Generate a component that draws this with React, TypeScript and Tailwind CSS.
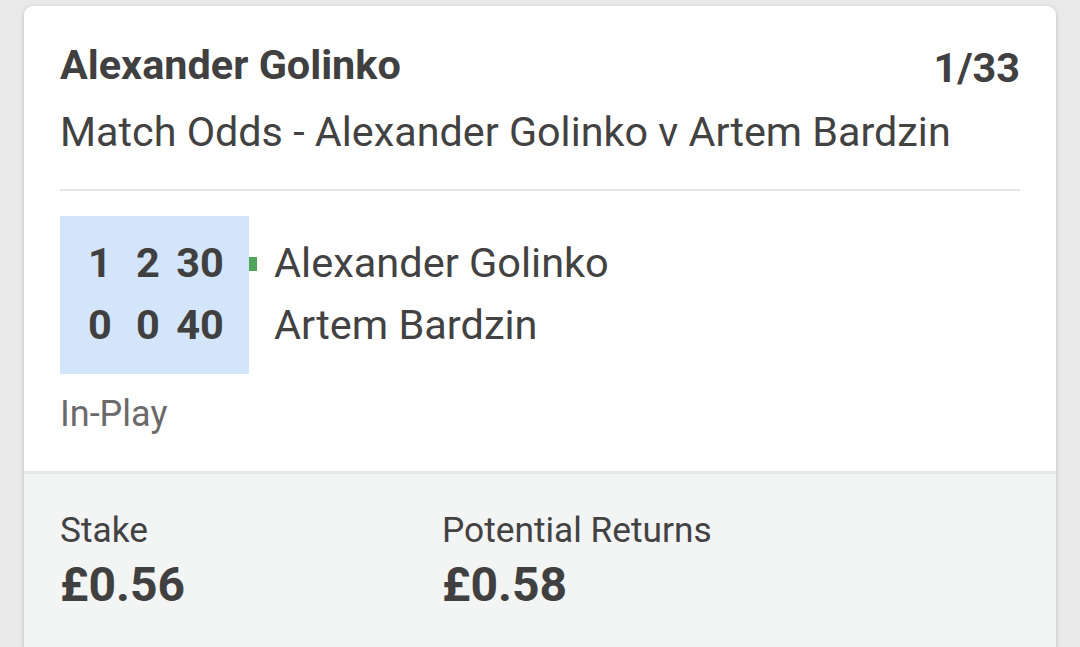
const scores = [
  { sets: "1", games: "2", points: "30", name: "Alexander Golinko", serving: true },
  { sets: "0", games: "0", points: "40", name: "Artem Bardzin", serving: false },
];

export default function App() {
  return (
    <div
      className="h-[647px] overflow-hidden bg-[#e9e9e9] pt-[6px] px-[24px] text-[#424242]"
      style={{ fontFamily: "Roboto, 'Open Sans', sans-serif" }}
    >
      <div className="rounded-t-[9px] bg-white shadow-[0_1px_4px_rgba(0,0,0,0.18)] overflow-hidden">
        {/* Bet details */}
        <div className="px-[36px] pt-[34px] pb-[36px]">
          <div className="flex items-start justify-between">
            <div className="text-[41.4px] leading-[50px] font-bold text-[#404040]">
              Alexander Golinko
            </div>
            <div className="mt-[3px] text-[41.4px] leading-[50px] font-bold text-[#404040]">
              1/33
            </div>
          </div>
          <div className="mt-[14px] text-[41.3px] leading-[50px]">
            Match Odds - Alexander Golinko v Artem Bardzin
          </div>

          <div className="mt-[32px] h-[2px] bg-[#e6e6e6]" />

          {/* Scoreboard */}
          <div className="mt-[25px] flex">
            <div className="w-[189px] bg-[#d3e5fa] pl-[28px] pt-[16px] pb-[18px] text-[41.5px] leading-[62px] font-bold text-[#404040]">
              {scores.map((s) => (
                <div key={s.name} className="flex">
                  <span className="w-[24px] text-center">{s.sets}</span>
                  <span className="ml-[24px] w-[24px] text-center">{s.games}</span>
                  <span className="ml-[16px] w-[48px] text-center">{s.points}</span>
                </div>
              ))}
            </div>
            <div className="pt-[16px] flex flex-col">
              {scores.map((s) => (
                <div key={s.name} className="flex items-center h-[62px]">
                  <div className="w-[8px] flex items-center">
                    {s.serving && <span className="mt-[2px] block w-[8px] h-[14px] bg-[#4ea55a]" />}
                  </div>
                  <span className="ml-[17px] text-[41.5px] leading-[62px]">{s.name}</span>
                </div>
              ))}
            </div>
          </div>

          <div className="mt-[19px] text-[36px] leading-[42px] text-[#6a6a6a]">In-Play</div>
        </div>

        {/* Stake / returns */}
        <div className="border-t-[3px] border-[#e6e8e8] bg-[#f3f4f4] px-[36px] pt-[35px] pb-[60px]">
          <div className="flex">
            <div className="w-[382px]">
              <div className="text-[35.3px] leading-[42px]">Stake</div>
              <div className="mt-[7px] text-[48px] leading-[54px] font-bold text-[#404040]">£0.56</div>
            </div>
            <div>
              <div className="text-[35.3px] leading-[42px]">Potential Returns</div>
              <div className="mt-[7px] text-[48px] leading-[54px] font-bold text-[#404040]">£0.58</div>
            </div>
          </div>
        </div>
      </div>
    </div>
  );
}
